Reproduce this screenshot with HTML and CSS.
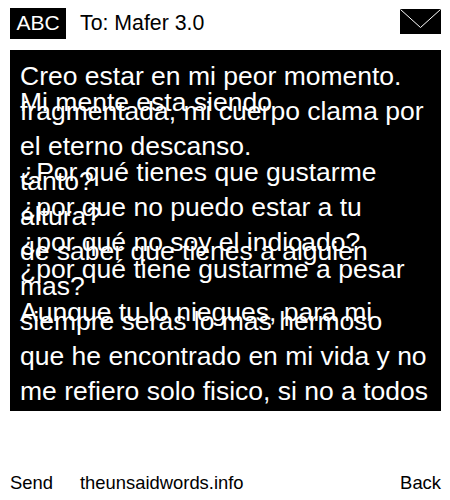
FILE: index.html
```html
<!DOCTYPE html>
<html lang="es">
<head>
<meta charset="utf-8">
<title>The Unsaid Words</title>
<link rel="stylesheet" href="styles.css">
</head>
<body>
<div class="phone">
  <header class="top">
    <div class="abc">ABC</div>
    <div class="to">To: Mafer 3.0</div>
    <svg class="env" width="41" height="25" viewBox="0 0 41 25"><rect width="41" height="25" fill="#000"/><path d="M0.5 0.5L20.5 18.5L40.5 0.5" fill="none" stroke="#fff" stroke-width="1"/></svg>
  </header>
  <main class="msg">
    <div class="ln s26">Creo estar en mi peor momento.</div>
    <div class="ln s9">Mi mente esta siendo</div>
    <div class="ln s35">fragmentada, mi cuerpo clama por</div>
    <div class="ln s26">el eterno descanso.</div>
    <div class="ln s9">¿Por qué tienes que gustarme</div>
    <div class="ln s26">tanto?</div>
    <div class="ln s9">¿por que no puedo estar a tu</div>
    <div class="ln s26">altura?</div>
    <div class="ln s9">¿por qué no soy el indicado?</div>
    <div class="ln s18">de saber que tienes a alguien</div>
    <div class="ln s17">¿por qué tiene gustarme a pesar</div>
    <div class="ln s26">mas?</div>
    <div class="ln s9">Aunque tu lo niegues, para mi</div>
    <div class="ln s35">siempre seras lo mas hermoso</div>
    <div class="ln s35">que he encontrado en mi vida y no</div>
    <div class="ln s35">me refiero solo fisico, si no a todos</div>
  </main>
  <footer class="bottom">
    <div class="send">Send</div>
    <div class="site">theunsaidwords.info</div>
    <div class="back">Back</div>
  </footer>
</div>
</body>
</html>
```
FILE: styles.css
```css
html, body { margin: 0; padding: 0; background: #fff; }
body { font-family: "Liberation Sans", Arial, sans-serif; color: #000; }
.phone { width: 450px; height: 500px; display: flex; flex-direction: column; overflow: hidden; }
.top { display: flex; align-items: center; height: 31px; margin-top: 8px; padding: 0 9px 0 10px; }
.abc { width: 56px; height: 31px; line-height: 29px; background: #000; color: #fff; font-size: 21px; text-align: center; }
.to { flex: 1; margin-left: 14px; font-size: 21.3px; }
.env { display: block; margin-top: -5px; }
.msg { margin: 11px 9px 0 10px; height: 361px; padding: 9px 0 0 10px; background: #000; color: #fff; font-size: 26.5px; overflow: hidden; box-sizing: border-box; }
.ln { line-height: 35px; white-space: nowrap; }
.s9 { height: 9px; }
.s17 { height: 17px; }
.s18 { height: 18px; }
.s26 { height: 26px; }
.s35 { height: 35px; }
.bottom { display: flex; margin-top: 60px; padding: 0 9px 0 10px; font-size: 18.4px; line-height: 24px; }
.send { width: 70px; }
.site { flex: 1; }
```
